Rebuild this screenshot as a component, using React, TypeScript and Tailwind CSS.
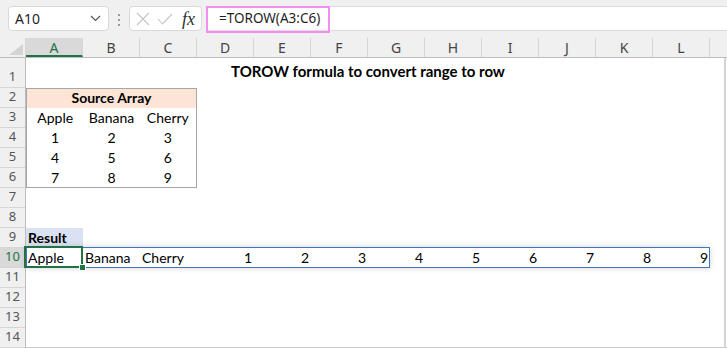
import React from "react";

const COLS = ["A", "B", "C", "D", "E", "F", "G", "H", "I", "J", "K", "L"];
const ROWS = Array.from({ length: 14 }, (_, i) => i + 1);
const SOURCE = [
  ["Apple", "Banana", "Cherry"],
  ["1", "2", "3"],
  ["4", "5", "6"],
  ["7", "8", "9"],
];
const RESULT = ["Apple", "Banana", "Cherry", "1", "2", "3", "4", "5", "6", "7", "8", "9"];

const ui = { fontFamily: '"Noto Sans", "Open Sans", sans-serif' };
const cell = { fontFamily: 'Lato, "Open Sans", sans-serif' };

function Toolbar() {
  return (
    <div className="flex h-[38px] items-start bg-[#f0f0f0] pt-[6px]" style={ui}>
      <div className="ml-[8px] flex h-[25px] w-[101px] items-center justify-between rounded-[4px] border border-[#d9d9d9] bg-white pl-[6px] pr-[7px]">
        <span className="text-[14px] leading-none text-[#1f1f1f]">A10</span>
        <svg width="11" height="7" viewBox="0 0 11 7" fill="none" stroke="#555" strokeWidth="1.2">
          <path d="M1 1l4.5 4.5L10 1" />
        </svg>
      </div>
      <div className="ml-[9px] mt-[8px] flex flex-col gap-[3px]">
        <span className="h-[2px] w-[2px] bg-[#9a9a9a]" />
        <span className="h-[2px] w-[2px] bg-[#9a9a9a]" />
        <span className="h-[2px] w-[2px] bg-[#9a9a9a]" />
      </div>
      <div className="ml-[9px] flex h-[25px] w-[73px] items-center rounded-[4px] border border-[#d9d9d9] bg-white pl-[6px]">
        <svg width="14" height="14" viewBox="0 0 14 14" fill="none" stroke="#c4c4c4" strokeWidth="1.1">
          <path d="M1 1l12 12M13 1L1 13" />
        </svg>
        <svg className="ml-[7px]" width="16" height="12" viewBox="0 0 16 12" fill="none" stroke="#c4c4c4" strokeWidth="1.1">
          <path d="M1 6l4.5 5L15 1" />
        </svg>
        <span className="ml-[9px] text-[18px] italic leading-none text-[#333]" style={{ fontFamily: '"Liberation Serif", serif' }}>
          fx
        </span>
      </div>
      <div className="relative ml-[4px] flex h-[25px] flex-1 items-center border-y border-[#dcdcdc] bg-white pl-[13px]">
        <div className="absolute -top-[1px] left-0 h-[27px] w-[124px] border-2 border-[#f28ef2]" />
        <span className="text-[13.5px] text-[#1f1f1f]">=TOROW(A3:C6)</span>
      </div>
    </div>
  );
}

function ColumnHeaders() {
  return (
    <div className="flex h-[20px] border-b border-[#bdbdbd] bg-[#f0f0f0]" style={ui}>
      <div className="flex w-[26px] items-end justify-end border-r border-[#d6d6d6] pb-[2px] pr-[2px]">
        <svg width="14" height="11" viewBox="0 0 14 11">
          <polygon points="14,0 14,11 0,11" fill="#d4d4d4" />
        </svg>
      </div>
      {COLS.map((c) => (
        <div
          key={c}
          className={
            c === "A"
              ? "flex w-[57px] items-center justify-center border-r border-b-2 border-r-[#d6d6d6] border-b-[#217346] bg-[#d9d9d9] pt-[2px] text-[14px] text-[#217346]"
              : "flex w-[57px] items-center justify-center border-r border-[#d6d6d6] text-[14px] text-[#444]"
          }
        >
          {c}
        </div>
      ))}
      <div className="flex-1" />
    </div>
  );
}

function RowHeaders() {
  return (
    <div className="flex w-[26px] flex-col border-r border-[#bdbdbd] bg-[#f0f0f0]" style={ui}>
      {ROWS.map((r) => (
        <div
          key={r}
          className={
            (r === 1 ? "h-[30px] " : "h-[20px] ") +
            (r === 10
              ? "flex items-end justify-center border-b border-[#d6d6d6] bg-[#d9d9d9] pb-[1px] text-[13px] leading-[19px] text-[#217346]"
              : "flex items-end justify-center border-b border-[#d6d6d6] pb-[1px] text-[13px] leading-[19px] text-[#555]")
          }
        >
          {r}
        </div>
      ))}
    </div>
  );
}

function Sheet() {
  return (
    <div className="flex h-[290px] flex-1 border-b border-[#c8c8c8] bg-white" style={cell}>
      <div className="grid grid-cols-[repeat(12,57px)] grid-rows-[30px_repeat(12,20px)_19px] text-[14px] text-black">
        <div className="col-span-12 row-start-1 text-center pt-[4px] text-[15px] font-bold leading-[19px]">
          TOROW formula to convert range to row
        </div>

        <div className="col-span-3 col-start-1 row-span-5 row-start-2 flex flex-col border border-[#a6a6a6]">
          <div className="h-[19px] bg-[#fce4d6] text-center font-bold leading-[17px]">Source Array</div>
          {SOURCE.map((row, i) => (
            <div key={i} className={(i === 3 ? "h-[18px] " : "h-[20px] ") + "grid grid-cols-3 text-center leading-[19px]"}>
              {row.map((v) => (
                <span key={v}>{v}</span>
              ))}
            </div>
          ))}
        </div>

        <div className="col-start-1 row-start-9 bg-[#d9e1f2] pl-[2px] font-bold leading-[19px]">Result</div>

        <div className="relative col-span-12 row-start-10 grid grid-cols-[repeat(12,57px)] leading-[19px]">
          <div className="absolute -top-[1px] left-0 h-[21px] w-[684px] border border-[#4472c4] shadow-[0_0_6px_rgba(0,0,0,0.18)]" />
          {RESULT.map((v, i) => (
            <span key={i} className={i < 3 ? "relative pl-[2px] text-left" : "relative pr-[2px] text-right"}>
              {v}
            </span>
          ))}
          <div className="absolute -left-[2px] -top-[2px] h-[22px] w-[59px] border-2 border-[#217346]" />
          <div className="absolute left-[53px] top-[16px] h-[7px] w-[7px] border border-white bg-[#217346]" />
        </div>
      </div>
      <div className="flex-1" />
      <div className="w-[2px] bg-[#d4d4d4]" />
      <div className="w-px" />
    </div>
  );
}

export default function App() {
  return (
    <div className="h-[348px] w-[727px] overflow-hidden bg-white">
      <Toolbar />
      <ColumnHeaders />
      <div className="flex">
        <RowHeaders />
        <Sheet />
      </div>
    </div>
  );
}
